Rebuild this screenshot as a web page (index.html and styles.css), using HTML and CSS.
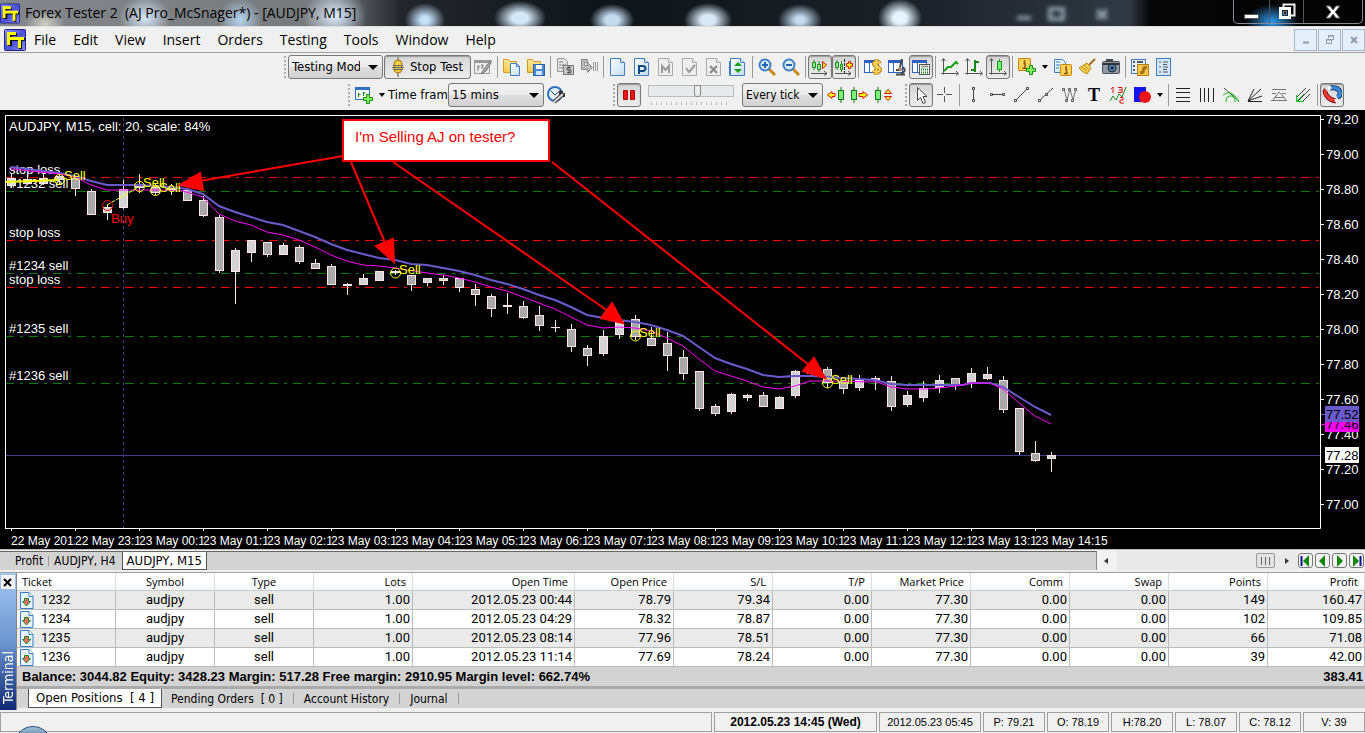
FILE: index.html
```html
<!DOCTYPE html>
<html lang="en">
<head>
<meta charset="utf-8">
<title>Forex Tester 2 (AJ Pro_McSnager*) - [AUDJPY, M15]</title>
<link rel="stylesheet" href="styles.css">
</head>
<body>
<svg class="defs" aria-hidden="true">
  <defs>
    <linearGradient id="ftbg" x1="0" y1="0" x2="1" y2="1"><stop offset="0" stop-color="#8f93f5"/><stop offset=".5" stop-color="#4a4fd8"/><stop offset="1" stop-color="#8a8df0"/></linearGradient>
    <linearGradient id="paper" x1="0" y1="0" x2="1" y2="1"><stop offset="0" stop-color="#fff"/><stop offset="1" stop-color="#c3ddf5"/></linearGradient>
    <linearGradient id="folder" x1="0" y1="0" x2="0" y2="1"><stop offset="0" stop-color="#ffe9a0"/><stop offset="1" stop-color="#f8c548"/></linearGradient>
    <symbol id="logo" viewBox="0 0 22 22"><rect x=".5" y=".5" width="21" height="21" rx="1" fill="url(#ftbg)" stroke="#20208c"/><path d="M4 4h9v3H8v2h4v3H8v5H4z" fill="#111" /><path d="M11 9h10v3h-3v8h-3v-8h-4z" fill="#111"/><path d="M3 3h9v3H6v2h4v3H6v5H3z" fill="#ff0"/><path d="M10 8h10v3h-3v8h-3v-8h-4z" fill="#ff0"/></symbol>
    <symbol id="doc" viewBox="0 0 18 18"><path d="M1.500 .5h10l4 4v13h-14z" fill="url(#paper)" stroke="#3b7fc4"/><path d="M11.500 .5v4h4" fill="#e4f0fb" stroke="#3b7fc4"/></symbol>
    <symbol id="doc-off" viewBox="0 0 18 18"><path d="M1.500 .5h10l4 4v13h-14z" fill="#eee" stroke="#aaa"/><path d="M11.500 .5v4h4" fill="#eee" stroke="#aaa"/></symbol>
    <symbol id="axes" viewBox="0 0 18 18"><path d="M2.500 1v15.500M0 15.500h17M.5 3l2-2.500 2 2.500M15 13l2.500 2.500-2.500 2" fill="none" stroke="#555"/></symbol>
    <symbol id="folder-icon" viewBox="0 0 18 18"><path d="M.5 14.500v-13h5l1 2h7v11z" fill="url(#folder)" stroke="#d69a1c"/></symbol>
    <symbol id="candle" viewBox="0 0 6 16"><path d="M3 0v16" stroke="#157515"/><rect x=".5" y="3.500" width="5" height="9" fill="#7df07d" stroke="#157515"/></symbol>
    <symbol id="info" viewBox="0 0 12 12"><rect x=".5" y=".5" width="11" height="11" rx="1" fill="#fbd35a" stroke="#c8850a"/><path d="M6 2v2M5 5h1.500v4M4 9.500h4" stroke="#8a5a00" stroke-width="1.500" fill="none"/></symbol>
    <symbol id="sell-doc" viewBox="0 0 14 17"><path d="M.5 .5h8.500l4 4v12h-12.500z" fill="#eaf4fd" stroke="#3b7fc4"/><path d="M9 .5v4h4" fill="#fff" stroke="#3b7fc4"/><path d="M4.500 6.500h4v3h2l-4 4.500-4-4.500h2z" fill="#ff6b6b" stroke="#178a17"/></symbol>
    <symbol id="wincells" viewBox="0 0 18 18"><rect x=".5" y="2.500" width="14" height="12" fill="#fff" stroke="#2f62c0"/><path d="M1 4h13" stroke="#2f62c0" stroke-width="2"/><path d="M5.500 5v9" stroke="#2f62c0"/></symbol>
  </defs>
</svg>

<header class="titlebar">
  <svg class="logo-sm"><use href="#logo"/></svg>
  <h1 class="title">Forex Tester 2&nbsp; (AJ Pro_McSnager*) - [AUDJPY, M15]</h1>
  <div class="ghost"><svg width="120" height="22"><path d="M0 16h14M33 7h13v10h-13zM80 8l10 9M90 8l-10 9" fill="none" stroke="#b5cbd8" stroke-width="4"/></svg></div>
  <div class="window-buttons">
    <button class="wb" aria-label="Minimize"><svg width="18" height="18"><rect x="1.500" y="11.500" width="14" height="4" fill="#fff" stroke="#555"/></svg></button>
    <button class="wb wb-mid" aria-label="Restore"><svg width="18" height="18"><path d="M5.500 4.500v-3h11v11h-4" fill="none" stroke="#eee" stroke-width="2"/><rect x="2.500" y="5.500" width="9" height="9" fill="none" stroke="#fff" stroke-width="3"/><rect x="5.500" y="8.500" width="3" height="3" fill="#222" stroke="#777"/></svg></button>
    <button class="wb wb-close" aria-label="Close"><svg width="18" height="18"><path d="M2 3h4l3 4 3-4h4l-5 6 5 6h-4l-3-4-3 4h-4l5-6z" fill="#fff" stroke="#666"/></svg></button>
  </div>
</header>

<nav class="menubar">
  <svg class="logo"><use href="#logo"/></svg>
  <button>File</button><button>Edit</button><button>View</button><button>Insert</button><button>Orders</button><button>Testing</button><button>Tools</button><button>Window</button><button>Help</button>
  <div class="mdi">
    <button aria-label="Minimize chart"><svg width="12" height="12"><path d="M3 8.500h6" stroke="#8b9cb5" stroke-width="2"/></svg></button>
    <button aria-label="Restore chart"><svg width="12" height="12"><path d="M4.500 4v-2.500h5v4h-2M2 5.500h5.500v4h-5v-4" fill="none" stroke="#8b9cb5"/><path d="M4 2h6M2 6h6" stroke="#8b9cb5"/></svg></button>
    <button aria-label="Close chart"><svg width="12" height="12"><path d="M3 3l6 6M9 3l-6 6" stroke="#8b9cb5" stroke-width="2"/></svg></button>
  </div>
</nav>

<section class="toolbars">
  <div class="toolbar toolbar-main">
    <i class="grip"></i>
    <span class="combo combo-mode"><select aria-label="Mode"><option>Testing Mode</option></select></span>
    <button class="tool pressed stop"><svg width="12" height="20"><path d="M6 0v20" stroke="#999" stroke-width="2"/><rect x="2" y="3" width="8" height="13" rx="4" fill="#f4cc42" stroke="#a87a10"/><path d="M1 8.500h10M0 10.500h12M1 12.500h10" stroke="#666"/></svg>Stop Test</button>
    <button class="tool" aria-label="Edit test"><svg width="18" height="18"><rect x=".5" y="2.500" width="15" height="13" fill="#eee" stroke="#999"/><path d="M1 4h14" stroke="#999" stroke-width="2"/><path d="M4 7v6M4 9h2M8 6v5M8 8h2M17 2l-7 9-3 5 5-3 5-8z" fill="#aaa" stroke="#777"/></svg></button>
    <i class="sep"></i>
    <button class="tool" aria-label="Open project"><svg width="18" height="18"><use href="#folder-icon"/><path d="M7.500 5.500h6l3 3v9h-9z" fill="url(#paper)" stroke="#3b7fc4"/><path d="M13.500 5.500v3h3" fill="none" stroke="#3b7fc4"/></svg></button>
    <button class="tool" aria-label="Save project"><svg width="18" height="18"><use href="#folder-icon"/><rect x="6.500" y="6.500" width="11" height="11" fill="#4a88d8" stroke="#2b62ae"/><rect x="9" y="7" width="6" height="4" fill="#fff"/><rect x="9" y="13" width="6" height="4" fill="#d7e6f7"/></svg></button>
    <i class="sep"></i>
    <button class="tool" aria-label="Statement"><svg width="18" height="18"><path d="M1.500 .5h7l3 3v10h-10z" fill="#e4e4e4" stroke="#999"/><path d="M3 4h4M3 7h7M3 10h5" stroke="#888"/><rect x="7.500" y="7.500" width="10" height="9" fill="#ccc" stroke="#777"/><path d="M15 9.500h-4v2.500h4v2.500h-4M13 8v8" fill="none" stroke="#555"/></svg></button>
    <button class="tool" aria-label="Jump to"><svg width="18" height="18"><path d="M1.500 1.500h6v3h-3v3h3v-3l5 5-5 5v-3h-6z" fill="#bbb" stroke="#888"/><path d="M13.500 4v9M15.500 4v9M17.500 4v9" stroke="#999"/></svg></button>
    <i class="sep"></i>
    <button class="tool" aria-label="New"><svg width="18" height="18"><use href="#doc"/></svg></button>
    <button class="tool" aria-label="Pending order"><svg width="18" height="18"><use href="#doc"/><path d="M6 16v-8h4a2 2 0 0 1 0 5H7" fill="none" stroke="#12487c" stroke-width="2"/></svg></button>
    <button class="tool" aria-label="Modify order"><svg width="18" height="18"><use href="#doc-off"/><path d="M5 15V8l3.500 4L12 8v7" fill="none" stroke="#999" stroke-width="2"/></svg></button>
    <button class="tool" aria-label="Confirm"><svg width="18" height="18"><use href="#doc-off"/><path d="M5 10l3 4 6-7" fill="none" stroke="#999" stroke-width="2"/></svg></button>
    <button class="tool" aria-label="Delete order"><svg width="18" height="18"><use href="#doc-off"/><path d="M5 8l7 7M12 8l-7 7" stroke="#888" stroke-width="2"/></svg></button>
    <button class="tool" aria-label="Order list"><svg width="18" height="18"><use href="#doc"/><path d="M.5 3v14.500h13" fill="none" stroke="#3b7fc4"/><path d="M9 4l4 4H5zM9 15l4-4H5z" fill="#14a014"/></svg></button>
    <i class="sep"></i>
    <button class="tool" aria-label="Zoom in"><svg width="18" height="18"><path d="M11 11l6 6" stroke="#c98a1a" stroke-width="3"/><circle cx="7" cy="7" r="5.500" fill="#dcecfb" stroke="#3f7fc8" stroke-width="2"/><path d="M4 7h6M7 4v6" stroke="#1f62b8" stroke-width="2"/></svg></button>
    <button class="tool" aria-label="Zoom out"><svg width="18" height="18"><path d="M11 11l6 6" stroke="#c98a1a" stroke-width="3"/><circle cx="7" cy="7" r="5.500" fill="#dcecfb" stroke="#3f7fc8" stroke-width="2"/><path d="M4 7h6" stroke="#1f62b8" stroke-width="2"/></svg></button>
    <i class="sep"></i>
    <button class="tool pressed" aria-label="Auto scroll"><svg width="18" height="18"><path d="M3 2v10M8 3v11" stroke="#178a17"/><path d="M1.500 4.500h3v5h-3zM6.500 6.500h3v5h-3z" fill="#8ef08e" stroke="#178a17"/><path d="M11.500 3.500v7l4-3.500z" fill="#ff0" stroke="#d81414"/><path d="M0 15.500h16M13 13l3 2.500-3 2" fill="none" stroke="#555"/></svg></button>
    <button class="tool pressed" aria-label="Chart shift"><svg width="18" height="18"><path d="M2 2v10M6.500 3v11" stroke="#178a17"/><path d="M.5 4.500h3v5h-3zM5.500 6.500h2v5h-2z" fill="#8ef08e" stroke="#178a17"/><path d="M9.500 1v14" stroke="#222" stroke-dasharray="3 1"/><path d="M13.500 3.500h2v2h2v3h-2v2h-2v-2h-2v-3h2z" fill="#ff0" stroke="#d81414"/><path d="M0 15.500h16M13 13l3 2.500-3 2" fill="none" stroke="#555"/></svg></button>
    <i class="sep"></i>
    <button class="tool" aria-label="Symbols"><svg width="18" height="18"><use href="#wincells"/><path d="M16 5.500c-1-2-6-2-6 .5s6 2.500 6 5.500-5 3-7 1M12.500 1v16" fill="none" stroke="#b47808" stroke-width="4"/><path d="M16 5.500c-1-2-6-2-6 .5s6 2.500 6 5.500-5 3-7 1M12.500 1v16" fill="none" stroke="#ffd65a" stroke-width="2"/></svg></button>
    <button class="tool" aria-label="Data center"><svg width="18" height="18"><use href="#wincells"/><path d="M14 1l-2 8M15 9q4 5-2 6M8 16.500h9M8 12h5" fill="none" stroke="#444" stroke-width="2"/><circle cx="12" cy="11" r="2" fill="#a86"/></svg></button>
    <button class="tool pressed" aria-label="Terminal window"><svg width="18" height="18"><use href="#wincells"/><rect x="7.500" y="6.500" width="10" height="10" fill="#fff" stroke="#555"/><path d="M9 8.500h7" stroke="#999" stroke-width="2"/><path d="M9 11.500h7M9 14.500h7" stroke="#178a17" stroke-width="2" stroke-dasharray="1 1"/></svg></button>
    <i class="sep"></i>
    <button class="tool" aria-label="Line chart"><svg width="18" height="18"><use href="#axes"/><path d="M3 13l4-4h3l5-5 2 2" fill="none" stroke="#14a014" stroke-width="2"/></svg></button>
    <button class="tool" aria-label="Bar chart"><svg width="18" height="18"><use href="#axes"/><path d="M10 2v12M6 12h4M10 4h4" stroke="#178a17" stroke-width="2"/></svg></button>
    <button class="tool pressed" aria-label="Candle chart"><svg width="18" height="18"><use href="#axes"/><path d="M10.500 1v13" stroke="#14a014"/><rect x="8.500" y="3.500" width="4" height="8" fill="#7df07d" stroke="#14a014"/></svg></button>
    <i class="sep"></i>
    <button class="tool" aria-label="Add indicator"><svg width="18" height="18"><use href="#info" width="13" height="13"/><path d="M11.500 7.500h3v3h3v3h-3v3h-3v-3h-3v-3h3z" fill="#7df05a" stroke="#178a17"/></svg></button>
    <button class="drop" aria-label="Indicator menu"></button>
    <button class="tool" aria-label="Indicator list"><svg width="18" height="18"><path d="M.5 1.500h8l3 3v10h-11z" fill="url(#paper)" stroke="#3b7fc4"/><path d="M2 4h4M2 7h4M2 10h3" stroke="#3b7fc4"/><use href="#info" x="6" y="6" width="12" height="12"/></svg></button>
    <button class="tool" aria-label="Clear"><svg width="18" height="18"><path d="M17 1l-6 6" stroke="#a86a18" stroke-width="2"/><path d="M9 5l4 5-4 6q-5-2-8-6z" fill="#f6cf4c" stroke="#b98a18"/><path d="M4 9l5 4M6 7l5 5" stroke="#c7951e"/></svg></button>
    <button class="tool" aria-label="Screenshot"><svg width="18" height="18"><rect x=".5" y="3.500" width="17" height="12" rx="1" fill="#909aa6" stroke="#4c535c"/><rect x="4" y="1" width="7" height="3" fill="#444"/><path d="M1 6h16" stroke="#333" stroke-width="2"/><circle cx="10" cy="10" r="4" fill="#4b82b8" stroke="#222"/><circle cx="10" cy="10" r="1.500" fill="#111"/></svg></button>
    <i class="sep"></i>
    <button class="tool" aria-label="Strategies"><svg width="18" height="18"><rect x=".5" y="1.500" width="14" height="14" fill="#e3effa" stroke="#3b7fc4"/><path d="M2 4h2M6 4h6M2 8h2M6 8h4M2 12h2" stroke="#555" stroke-width="2"/><rect x="6.500" y="6.500" width="11" height="11" fill="#f6c84c" stroke="#b97f10"/><path d="M9 15l3-1 1-4 3-1" fill="none" stroke="#a87010" stroke-width="3"/></svg></button>
    <button class="tool" aria-label="Strategy list"><svg width="18" height="18"><rect x="1.500" y=".5" width="14" height="17" fill="#d5e8fa" stroke="#3b7fc4"/><path d="M4 4h2M8 4h5M4 9h2M8 9h5M4 14h2M8 14h5M8 6.500h4M8 11.500h4" stroke="#555"/></svg></button>
  </div>

  <div class="toolbar toolbar-second">
    <i class="grip"></i>
    <button class="tool" aria-label="New chart"><svg width="18" height="18"><rect x=".5" y="1.500" width="14" height="12" fill="#fff" stroke="#2f6fc4"/><path d="M0 2.500h15" stroke="#2f6fc4" stroke-width="3"/><path d="M3.500 7v4M3.500 8.500h2M8.500 6v4M8.500 7h2" stroke="#178a17"/><path d="M11.500 8.500h3v3h3v3h-3v3h-3v-3h-3v-3h3z" fill="#7df05a" stroke="#178a17"/></svg></button>
    <button class="drop" aria-label="New chart menu"></button>
    <label class="tf-label" for="tf">Time frame</label>
    <span class="combo combo-tf"><select id="tf"><option>15 mins</option></select></span>
    <button class="tool" aria-label="Time settings"><svg width="18" height="18"><circle cx="8" cy="8" r="7" fill="#e4f1fc" stroke="#2f6fc4" stroke-width="2"/><path d="M4 5l4 4 6-5" fill="none" stroke="#333"/><path d="M7 16l9-8M14 5v4h4" fill="none" stroke="#333" stroke-width="4"/><path d="M7 16l9-8" stroke="#ddd" stroke-width="2"/></svg></button>

    <i class="grip grip-play"></i>
    <button class="tool pressed" aria-label="Pause"><svg width="18" height="18"><path d="M3.500 4.500h4v9h-4zM10.500 4.500h4v9h-4z" fill="#f01414" stroke="#b00808"/></svg></button>
    <span class="slider"><input type="range" aria-label="Speed" min="0" max="100" value="58"></span>
    <span class="combo combo-tick"><select aria-label="Tick mode"><option>Every tick</option></select></span>
    <button class="tool" aria-label="Step back"><svg width="18" height="18"><path d="M5 5.500v2h3v3H5v2L.5 9z" fill="#ff0" stroke="#d81414"/><use href="#candle" x="11" y="1" width="6" height="16"/></svg></button>
    <button class="tool" aria-label="Step forward"><svg width="18" height="18"><use href="#candle" x="0" y="1" width="6" height="16"/><path d="M12 5.500v2H8v3h4v2L16.500 9z" fill="#ff0" stroke="#d81414"/></svg></button>
    <button class="tool" aria-label="Step size"><svg width="18" height="18"><use href="#candle" x="0" y="1" width="6" height="16"/><path d="M13 3.500l3.500 4h-7zM13 14.500l3.500-4h-7z" fill="#ff0" stroke="#d81414"/></svg></button>

    <i class="grip grip-draw"></i>
    <button class="tool pressed" aria-label="Pointer"><svg width="18" height="18"><path d="M5.500 1.500v13l3-3 2.500 6 2.500-1-2.500-6h4z" fill="#fff" stroke="#444"/></svg></button>
    <button class="tool" aria-label="Crosshair"><svg width="18" height="18"><path d="M8.500 1v6M8.500 10v6M1 8.500h6M10 8.500h6" stroke="#555"/></svg></button>
    <i class="sep"></i>
    <button class="tool" aria-label="Vertical line"><svg width="18" height="18"><path d="M8.500 3v11" stroke="#444"/><path d="M7.500 1.500h2v2h-2zM7.500 13.500h2v2h-2z" fill="#fff" stroke="#444"/></svg></button>
    <button class="tool" aria-label="Horizontal line"><svg width="18" height="18"><path d="M3 8.500h11" stroke="#444"/><path d="M1.500 7.500h2v2h-2zM13.500 7.500h2v2h-2z" fill="#fff" stroke="#444"/></svg></button>
    <button class="tool" aria-label="Trend line"><svg width="18" height="18"><path d="M3 14L14 3" stroke="#444"/><path d="M1.500 13.500h2v2h-2zM13.500 1.500h2v2h-2z" fill="#fff" stroke="#444"/></svg></button>
    <button class="tool" aria-label="Ray"><svg width="18" height="18"><path d="M3 14L16 2" stroke="#444"/><path d="M1.500 13.500h2v2h-2zM8.500 7.500h2v2h-2z" fill="#fff" stroke="#444"/></svg></button>
    <button class="tool" aria-label="Polyline"><svg width="18" height="18"><path d="M3 3l3 11 3-11 3 11 3-11" fill="none" stroke="#777"/><path d="M1.500 2.500h2v2h-2zM7.500 2.500h2v2h-2zM13.500 2.500h2v2h-2zM4.500 13.500h2v2h-2zM10.500 13.500h2v2h-2z" fill="#fff" stroke="#555"/></svg></button>
    <button class="tool letter" aria-label="Text">T</button>
    <button class="tool" aria-label="Wave count"><svg width="18" height="18"><path d="M1 15l3-5 3 4 3-6 3 3 4-10" fill="none" stroke="#178a17"/><path d="M2 3l2-2v6M9 1.500h4v2.500h-3M13 4v2.500h-4M11 11.500h3v2.500h-3v3h4" fill="none" stroke="#e01414"/></svg></button>
    <button class="tool" aria-label="Shapes"><svg width="18" height="18"><rect x="1" y="1" width="12" height="15" fill="#1414f0"/><circle cx="12" cy="11" r="6" fill="#f01414"/></svg></button>
    <button class="drop" aria-label="Shape menu"></button>
    <i class="sep"></i>
    <button class="tool" aria-label="Fibonacci levels"><svg width="18" height="18"><path d="M2 2.500h14M2 6.500h14M2 11.500h14M2 15.500h14" stroke="#222"/></svg></button>
    <button class="tool" aria-label="Fibonacci time"><svg width="18" height="18"><path d="M2.500 2v14M6.500 2v14M10.500 2v14M15.500 2v14" stroke="#222"/></svg></button>
    <button class="tool" aria-label="Fibonacci arcs"><svg width="18" height="18"><path d="M2 2l15 13" stroke="#444"/><path d="M1 9q9-7 16 7M4 16q0-7 6-6 4 2 3 6" fill="none" stroke="#14c014" stroke-width="1"/></svg></button>
    <button class="tool" aria-label="Gann fan"><svg width="18" height="18"><path d="M2 15.500h14M2 15l14-5M2 15L15 3M2 15L8 3" stroke="#222"/></svg></button>
    <button class="tool" aria-label="Retracement"><svg width="18" height="18"><path d="M2 3.500h14M2 7.500h4M12 7.500h4M1 14.500h16M3 14l6-8 3 3 4 5M4 11.500h10" fill="none" stroke="#777"/></svg></button>
    <button class="tool" aria-label="Pitchfork"><svg width="18" height="18"><path d="M3 11L12 2M4 15L16 3M9 15l7-7" stroke="#444"/><path d="M2.500 9v6.500h7M3 15l7-7" fill="none" stroke="#14c014"/></svg></button>
    <i class="sep"></i>
    <button class="tool pressed" aria-label="Magnet"><svg width="20" height="20"><path d="M8 3q8-1 10 4 1 4-3 5" fill="none" stroke="#173f78" stroke-width="5"/><path d="M8 3q8-1 10 4 1 4-3 5" fill="none" stroke="#3d8ae0" stroke-width="3"/><path d="M4 5q-2 2 1 6t9 5" fill="none" stroke="#7c1010" stroke-width="5"/><path d="M4 5q-2 2 1 6t9 5" fill="none" stroke="#ee3a32" stroke-width="3"/><path d="M6 4l3-2M13 16l3-2" stroke="#fff" stroke-width="3"/></svg></button>
  </div>
</section>

<main>
  <svg class="chart" viewBox="0 110 1365 439" role="img" aria-label="AUDJPY M15 chart">
    <rect y="110" width="1365" height="439" fill="#000"/>
    <g class="levels">
      <path class="loss" d="M5 177.500H1320M5 240.500H1320M5 287.500H1320"/>
      <path class="entry" d="M5 191.500H1320M5 273.500H1320M5 336.500H1320M5 383.500H1320"/>
    </g>
    <path d="M123.500 118V528" stroke="#483d8b" stroke-dasharray="3 3"/>
    <path d="M6 455.500H1320" stroke="#483d8b"/>
    <g id="candles"></g>
    <g class="label">
      <text x="9" y="131">AUDJPY, M15, cell: 20, scale: 84%</text>
      <text x="9" y="174">stop loss</text><text x="9" y="188">#1232 sell</text>
      <text x="9" y="237">stop loss</text><text x="9" y="270">#1234 sell</text>
      <text x="9" y="284">stop loss</text><text x="9" y="333">#1235 sell</text>
      <text x="9" y="380">#1236 sell</text>
    </g>
    <polyline class="ma-slow" points="11,167 43,171 59,173 75,176 91,181 107,185 139,185 171,187 187,189 203,194 219,206 235,212 251,217 267,222 283,225 299,231 315,237 331,244 347,250 363,254 379,258 395,260 411,264 427,265 443,268 459,271 475,275 491,280 507,284 523,289 539,295 555,300 571,307 587,315 603,318 619,320 635,322 651,325 667,330 683,336 699,347 715,358 731,364 747,369 763,375 779,377 795,376 811,376 827,377 843,378 859,379 875,380 891,384 907,385 939,385 963,385 971,383 990,383 1003,387 1019,397 1035,407 1051,415"/>
    <polyline class="ma-fast" points="11,169 40,172 60,174 75,177 91,185 107,190 160,190 183,191 203,197 219,214 235,221 251,225 267,232 283,235 299,240 315,247 331,255 347,261 363,265 379,266 395,268 407,270 427,273 443,275 459,278 475,282 491,287 507,291 523,297 539,303 555,309 571,317 587,325 603,328 619,327 635,328 651,331 667,338 683,346 699,359 715,371 731,376 747,381 763,387 779,389 795,386 810,381 827,381 877,382 891,387 907,389 927,389 939,388 957,386 971,383 990,383 1003,389 1019,403 1035,416 1051,424"/>
    <path d="M6 182L59 180" stroke="#ff0" stroke-width="2"/>
    <path d="M107 205L139 187" stroke="#ff0" stroke-dasharray="4 1"/>
    <g class="fills">
      <circle cx="59.500" cy="179.500" r="5"/><circle cx="107.500" cy="205.500" r="5" stroke="#f00"/><circle cx="139.500" cy="186.500" r="5"/><circle cx="155.500" cy="190.500" r="5"/><circle cx="395.500" cy="273" r="5"/><circle cx="635.500" cy="336" r="5"/><circle cx="827.500" cy="383" r="5"/>
    </g>
    <g class="sells">
      <text x="64" y="180">Sell</text><text x="143" y="187">Sell</text><text x="159" y="192">Sell</text><text x="399" y="274">Sell</text><text x="639" y="337">Sell</text><text x="831" y="384">Sell</text>
      <text class="buy" x="111" y="223">Buy</text>
    </g>
    <path d="M5.500 529V115.500H1320.500V528.500H5" fill="none" stroke="#fff"/>
    <g class="arrows">
      <path d="M343 156L200 181M351 162L386 245M393 162L608 311M552 162L809 365"/>
      <path class="heads" d="M180 185L200 173L203 190zM394 262L376 246L393 239zM623 323L612 303L601 318zM825 378L814 358L803 371z"/>
    </g>
    <rect x="343" y="120" width="206" height="41" fill="#fff" stroke="#f00" stroke-width="2"/>
    <text class="note" x="355" y="142">I'm Selling AJ on tester?</text>
    <g id="price-axis" class="label"></g>
    <g id="time-axis" class="label"></g>
    <path d="M1321 424.500h4" stroke="#f0f"/><rect x="1325" y="418" width="34" height="14" fill="#f0f"/><text class="tag" x="1326" y="429">77.46</text>
    <path d="M1321 414.500h4" stroke="#6a5acd"/><rect x="1325" y="406" width="34" height="16" fill="#6a5acd"/><text class="tag" x="1326" y="419">77.52</text>
    <rect x="1325" y="447" width="34" height="16" fill="#fff"/><text class="tag" x="1326" y="460">77.28</text>
  </svg>
</main>

<div class="chart-tabs">
  <div class="tabs">
    <button>Profit</button><i class="tab-sep"></i><button>AUDJPY, H4</button><button class="active">AUDJPY, M15</button>
  </div>
  <div class="hscroll"><i class="arrow-left"></i><i class="thumb"></i><i class="arrow-right"></i></div>
  <div class="nav">
    <button aria-label="First"><svg width="11" height="12"><path d="M1.500 1v10" stroke="#10108c" stroke-width="2"/><path d="M9 0v12L3 6z" fill="#14870a"/></svg></button>
    <button aria-label="Previous"><svg width="11" height="12"><path d="M8 0v12L2 6z" fill="#14870a"/></svg></button>
    <button aria-label="Next"><svg width="11" height="12"><path d="M3 0v12l6-6z" fill="#14870a"/></svg></button>
    <button aria-label="Last"><svg width="11" height="12"><path d="M9.500 1v10" stroke="#10108c" stroke-width="2"/><path d="M2 0v12l6-6z" fill="#14870a"/></svg></button>
  </div>
</div>

<section class="terminal">
  <aside class="side">
    <button aria-label="Close terminal"><svg width="13" height="13"><path d="M3 3l7 7M10 3l-7 7" stroke="#000" stroke-width="2"/></svg></button>
    <span>Terminal</span>
  </aside>
  <div class="panel">
    <table class="positions">
      <colgroup><col class="c"><col class="c"><col class="c"><col class="c"><col><col class="c"><col class="c"><col class="c"><col class="c"><col class="c"><col class="c"><col class="c"><col class="c-last"></colgroup>
      <thead><tr><th>Ticket</th><th>Symbol</th><th>Type</th><th>Lots</th><th>Open Time</th><th>Open Price</th><th>S/L</th><th>T/P</th><th>Market Price</th><th>Comm</th><th>Swap</th><th>Points</th><th>Profit</th></tr></thead>
      <tbody>
        <tr><td><svg width="14" height="17"><use href="#sell-doc"/></svg>1232</td><td>audjpy</td><td>sell</td><td>1.00</td><td>2012.05.23 00:44</td><td>78.79</td><td>79.34</td><td>0.00</td><td>77.30</td><td>0.00</td><td>0.00</td><td>149</td><td>160.47</td></tr>
        <tr><td><svg width="14" height="17"><use href="#sell-doc"/></svg>1234</td><td>audjpy</td><td>sell</td><td>1.00</td><td>2012.05.23 04:29</td><td>78.32</td><td>78.87</td><td>0.00</td><td>77.30</td><td>0.00</td><td>0.00</td><td>102</td><td>109.85</td></tr>
        <tr><td><svg width="14" height="17"><use href="#sell-doc"/></svg>1235</td><td>audjpy</td><td>sell</td><td>1.00</td><td>2012.05.23 08:14</td><td>77.96</td><td>78.51</td><td>0.00</td><td>77.30</td><td>0.00</td><td>0.00</td><td>66</td><td>71.08</td></tr>
        <tr><td><svg width="14" height="17"><use href="#sell-doc"/></svg>1236</td><td>audjpy</td><td>sell</td><td>1.00</td><td>2012.05.23 11:14</td><td>77.69</td><td>78.24</td><td>0.00</td><td>77.30</td><td>0.00</td><td>0.00</td><td>39</td><td>42.00</td></tr>
      </tbody>
    </table>
    <div class="balance"><span>Balance: 3044.82 Equity: 3428.23 Margin: 517.28 Free margin: 2910.95 Margin level: 662.74%</span><span>383.41</span></div>
    <div class="term-tabs"><button class="active">Open Positions&nbsp; [ 4 ]</button><button>Pending Orders&nbsp; [ 0 ]</button><i class="tab-sep"></i><button>Account History</button><i class="tab-sep"></i><button>Journal</button><i class="tab-sep"></i></div>
  </div>
</section>

<footer class="status">
  <span class="cell fill"></span><span class="cell now">2012.05.23 14:45 (Wed)</span><span class="cell date">2012.05.23 05:45</span><span class="cell">P: 79.21</span><span class="cell">O: 78.19</span><span class="cell">H:78.20</span><span class="cell">L: 78.07</span><span class="cell">C: 78.12</span><span class="cell">V: 39</span>
  <i class="orb"></i>
</footer>
<script src="chart.js"></script>
</body>
</html>
```

FILE: styles.css
```css
* { box-sizing: border-box; }
body { margin: 0; background: #f0f0f0; color: #000; font: 13px/16px "DejaVu Sans Condensed", "Noto Sans", sans-serif; }
button { border: 0; padding: 0; margin: 0; background: none; font: inherit; color: inherit; }
svg { display: block; }
.defs { position: absolute; width: 0; height: 0; }

.titlebar {
  display: flex; align-items: center; height: 27px; padding-left: 0; overflow: hidden;
  border-bottom: 1px solid #ddd;
  background:
    radial-gradient(ellipse 20px 14px at 45px 24px, #cfd0c4, transparent),
    radial-gradient(ellipse 26px 22px at 145px 18px, #d5e6fa, transparent),
    radial-gradient(ellipse 22px 22px at 240px 20px, #b5d3ef, transparent),
    radial-gradient(ellipse 32px 26px at 335px 16px, #dcecff, transparent),
    radial-gradient(ellipse 20px 17px at 425px 20px, #c5e2fa 20%, transparent),
    radial-gradient(ellipse 26px 17px at 520px 18px, #d5e8f8 30%, transparent),
    radial-gradient(ellipse 22px 16px at 612px 20px, #c5dcf0 30%, transparent),
    radial-gradient(ellipse 24px 17px at 708px 20px, #d8e8f6 30%, transparent),
    radial-gradient(ellipse 22px 16px at 800px 20px, #c5dcf0 20%, transparent),
    radial-gradient(ellipse 22px 19px at 900px 18px, #e5f4ff 30%, transparent),
    radial-gradient(ellipse 26px 18px at 1272px 22px, #2f9df0, transparent),
    linear-gradient(90deg, #83878b 0, #777a7d 330px, #23272c 400px, #10151a 600px, #1a2026 900px, #303843 1130px, #060606 1150px, #030303 100%);
}
.logo-sm { width: 20px; height: 21px; }
.title { flex: 1; margin: 0 0 0 5px; font: 14px/20px "Open Sans", sans-serif; color: #000; white-space: nowrap; }
.ghost { margin-right: 96px; filter: blur(2px); opacity: .7; }
.window-buttons { display: flex; align-self: flex-start; margin-right: 2px; height: 24px; border: 1px solid #889; border-top: 0; border-radius: 0 0 5px 5px; }
.wb { width: 36px; display: flex; justify-content: center; align-items: center; border-right: 1px solid #556; }
.wb-mid { width: 34px; }
.wb-close { width: 58px; border-right: 0; }

.menubar { display: flex; align-items: center; height: 26px; gap: 17px; padding-left: 4px; border-bottom: 1px solid #a0a0a0; font: 14px/20px "Open Sans", sans-serif; }
.logo { width: 22px; height: 22px; margin-right: -9px; }
.mdi { display: flex; margin-left: auto; gap: 1px; }
.mdi button { width: 23px; height: 22px; display: grid; place-items: center; background: #e4effb; border: 1px solid #a8b8cc; }

.toolbars { padding-bottom: 1px; }
.toolbar { display: flex; align-items: center; height: 28px; }
.toolbar-main { padding-left: 284px; }
.toolbar-second { padding-left: 348px; }
.toolbar > * { flex: none; }
.grip { width: 4px; height: 22px; background: radial-gradient(circle at 1px 1px, #aaa 1px, transparent 1px) 0 0 / 4px 4px; }
.grip-play { margin-left: 45px; }
.grip-draw { margin-left: 9px; }
.tool { width: 24px; height: 24px; display: flex; align-items: center; justify-content: center; }
.pressed { border: 1px solid #777; border-radius: 3px; background: linear-gradient(#d6d6d6, #ececec); box-shadow: inset 0 1px 1px #999; }
.stop { width: 87px; gap: 6px; margin-left: 1px; white-space: nowrap; }
.letter { font: bold 18px/20px "Liberation Serif", serif; }
.sep { width: 5px; height: 22px; background: linear-gradient(90deg, transparent 2px, #9a9a9a 2px, #9a9a9a 3px, transparent 3px); }
.drop { width: 12px; height: 20px; display: grid; place-items: center; }
.drop::after { content: ""; border: 3px solid transparent; border-top: 4px solid #000; border-bottom: 0; }
.combo { position: relative; display: block; }
.combo select { appearance: none; width: 100%; height: 24px; padding: 0 22px 0 3px; border: 1px solid #7a7a7a; border-radius: 3px; background: linear-gradient(#f3f3f3, #ebebeb 50%, #dedede 51%, #d2d2d2); color: #000; font: inherit; overflow: hidden; }
.combo::after { content: ""; position: absolute; right: 5px; top: 10px; border: 5px solid transparent; border-top: 5px solid #000; border-bottom: 0; pointer-events: none; }
.combo-mode { width: 95px; }
.combo-tf { width: 96px; }
.combo-tick { width: 81px; margin-right: 1px; }
.combo-tick select { padding-right: 16px; font-size: 12px; }
.tf-label { width: 60px; overflow: hidden; white-space: nowrap; }
.slider { width: 86px; height: 20px; margin: 0 8px 0 7px; background: repeating-linear-gradient(90deg, #bbb 0 1px, transparent 1px 5px) 3px 17px / 80px 3px no-repeat; }
.slider input { appearance: none; display: block; width: 100%; height: 12px; margin: 0; background: #e7eaea; border: 1px solid #bbb; }
.slider input::-webkit-slider-thumb { appearance: none; width: 7px; height: 12px; border: 1px solid #888; border-radius: 0 0 3px 3px; background: #eee; }

.chart { width: 100%; height: auto; }
.chart text { font: 13px "Liberation Sans", sans-serif; }
.label { fill: #fff; }
.levels path { stroke-dasharray: 9 6 3 6; }
.loss { stroke: #f00; }
.entry { stroke: #008000; }
.ma-slow { fill: none; stroke: #6a5acd; stroke-width: 2; }
.ma-fast { fill: none; stroke: #f0f; }
.fills circle { fill: none; stroke: #ff0; }
.fills circle[stroke] { stroke: #f00; }
.sells { fill: #ff0; }
.buy { fill: #f00; }
.arrows { fill: none; stroke: #f00; stroke-width: 2; }
.heads { fill: #f00; }
.chart .note { font-size: 15px; fill: #f00; }
.chart .tag { fill: #000; }
.chart #time-axis text { font-size: 12px; }

.chart-tabs { display: flex; height: 24px; padding-top: 1px; border-bottom: 1px solid #a0a0a0; border-top: 1px solid #bbb; }
.tabs { flex: 1; display: flex; align-items: stretch; height: 19px; padding-left: 12px; background: #d3d3d3; border-top: 1px solid #666; border-right: 1px solid #888; font-size: 12px; }
.tabs button { padding: 0 3px; white-space: nowrap; }
.tab-sep { width: 1px; margin: 4px 2px; background: #999; }
.tabs .active { margin-left: 3px; padding: 0 4px; background: #fff; border: 1px solid #555; border-top: 0; font-size: 13px; }
.hscroll { display: flex; align-items: center; width: 201px; height: 19px; padding: 0 9px 0 7px; background: linear-gradient(90deg, #f2f2f2 20px, #e9e9e9 20px); }
.arrow-left, .arrow-right { border: 3px solid transparent; }
.arrow-left { border-right: 4px solid #333; border-left: 0; }
.arrow-right { border-left: 4px solid #333; border-right: 0; }
.thumb { width: 19px; height: 15px; margin: 0 10px 0 auto; border: 1px solid #999; border-radius: 2px; background: repeating-linear-gradient(90deg, #666 0 1px, transparent 1px 4px) 4px 3px / 9px 8px no-repeat, #e2e2e2; }
.nav { display: flex; gap: 2px; align-items: center; height: 19px; padding-right: 1px; }
.nav button { width: 15px; height: 15px; display: grid; place-items: center; border: 1px solid #777; border-radius: 3px; background: #f2f2f2; }

.terminal { display: flex; }
.side { width: 16px; display: flex; flex-direction: column; justify-content: space-between; align-items: center; padding: 2px 1px 6px 1px; background: linear-gradient(#a3c6f2, #6d95cf 50%, #0e2a74); color: #fff; }
.side button { width: 14px; height: 14px; background: #f4f4f4; }
.side span { writing-mode: vertical-rl; transform: rotate(180deg); font-size: 14px; line-height: 15px; }
.panel { flex: 1; min-width: 0; border-left: 1px solid #888; background: #fff; }
.positions { width: 100%; table-layout: fixed; border-collapse: separate; border-spacing: 0; }
.c { width: 99px; }
.c-last { width: 97px; }
th { height: 18px; padding: 0 6px; font: 11px/17px "Open Sans", sans-serif; text-align: right; border-right: 1px solid #ddd; border-bottom: 1px solid #ccc; background: linear-gradient(#fff 50%, #f3f5f7); white-space: nowrap; }
td { height: 19px; padding: 0 2px; font: 13px/18px Roboto, sans-serif; text-align: right; border-right: 1px solid #bbb; border-bottom: 1px solid #bbb; white-space: nowrap; }
tr:nth-child(odd) td { background: #eaeaea; }
tr > :first-child { text-align: left; }
th:first-child { padding-left: 5px; }
td:first-child { padding-left: 3px; }
td svg { display: inline-block; vertical-align: middle; margin-right: 7px; }
tr > :nth-child(2), tr > :nth-child(3) { text-align: center; }
.balance { display: flex; justify-content: space-between; height: 19px; padding: 0 2px 0 5px; background: #d3d3d3; font: bold 13px/19px "Liberation Sans", sans-serif; }
.term-tabs { display: flex; height: 24px; padding-left: 11px; border-top: 3px solid #aaa; border-bottom: 2px solid #f0f0f0; background: #d3d3d3; font-size: 12px; }
.term-tabs button { padding: 0 9px; white-space: nowrap; }
.term-tabs .tab-sep { margin: 4px 1px; }
.term-tabs .active { background: #fff; border: 1px solid #555; border-top: 0; padding: 0 7px; font-size: 13px; }

.status { position: relative; display: flex; gap: 2px; height: 23px; padding: 2px 0 1px; overflow: hidden; font: 11px/18px "Liberation Sans", sans-serif; }
.cell { width: 62px; border: 1px solid #a0a0a0; text-align: center; white-space: nowrap; }
.fill { flex: 1; }
.now { width: 163px; font-weight: bold; font-size: 12px; }
.date { width: 102px; }
.orb { position: absolute; left: 14px; top: 16px; width: 38px; height: 38px; border: 1px solid #234f78; border-radius: 50%; background: linear-gradient(#a6bfd4, #5b89b0 10px); }
```

FILE: chart.js
```js
// Each bar: high, body top, body bottom, low, rising (1) or falling (0)
const bars = [
  [174,178,186,188,1],[174,179,184,184,1],[174,178,184,185,1],[171,176,180,184,1],[176,178,189,196,0],
  [189,191,215,215,0],[205,207,213,220,1],[180,189,208,209,1],[174,184,188,193,1],[184,187,193,195,0],
  [184,187,190,195,1],[188,190,201,201,0],[196,200,216,217,0],[215,217,271,273,0],[248,250,272,304,1],
  [240,240,253,262,1],[242,242,255,257,0],[243,245,255,255,1],[245,247,262,264,0],[259,263,269,269,0],
  [264,266,285,285,0],[283,284,286,295,1],[274,278,285,285,1],[271,271,281,281,1],[270,271,273,275,1],
  [275,275,285,291,0],[278,278,283,286,1],[275,278,281,285,1],[278,278,288,292,0],[284,289,295,306,0],
  [294,296,309,317,0],[293,305,307,314,1],[301,306,318,319,0],[306,315,326,331,0],[320,327,328,332,1],
  [324,329,347,352,0],[345,348,356,366,0],[330,336,354,356,1],[317,320,335,339,1],[315,319,337,340,0],
  [327,338,346,346,0],[332,343,356,371,0],[350,357,374,380,0],[371,371,409,411,0],[404,406,414,416,0],
  [393,394,412,414,1],[394,395,398,401,1],[392,395,407,407,0],[396,397,409,409,1],[370,371,396,398,1],
  [371,372,374,375,1],[367,369,383,388,0],[381,381,389,394,0],[375,380,388,391,1],[376,378,380,390,1],
  [376,381,407,411,0],[391,395,405,407,1],[381,388,398,402,1],[375,380,388,393,1],[378,378,386,390,0],
  [368,373,384,388,1],[367,374,379,380,1],[376,380,410,413,0],[408,408,452,455,0],[441,453,461,462,0],
  [452,455,459,472,1]
];
const NS = "http://www.w3.org/2000/svg";
function add(parent, name, attrs, text) {
  const el = document.createElementNS(NS, name);
  for (const k in attrs) el.setAttribute(k, attrs[k]);
  if (text) el.textContent = text;
  parent.appendChild(el);
}
const candles = document.getElementById("candles");
bars.forEach(([high, top, bottom, low, up], i) => {
  const x = 11 + 16 * i;
  add(candles, "path", { d: `M${x + 0.5} ${high}V${low}`, stroke: "#ffe4e1" });
  add(candles, "rect", { x: x - 3.5, y: top + 0.5, width: 8, height: Math.max(bottom - top - 1, 0.1), fill: up ? "#d3d3d3" : "#a9a9a9", stroke: "#ffe4e1" });
});

const priceAxis = document.getElementById("price-axis");
for (let k = 0; k < 12; k++) {
  const y = 119 + 35 * k;
  add(priceAxis, "path", { d: `M1321 ${y + 0.5}h3`, stroke: "#fff" });
  add(priceAxis, "text", { x: 1326, y: y + 5 }, (79.2 - 0.2 * k).toFixed(2));
}

// Each time label covers the tail of the one before it
const timeAxis = document.getElementById("time-axis");
for (let k = 0; k < 17; k++) {
  const x = 11 + 64 * k;
  const hour = String(k - 2).padStart(2, "0");
  const text = k === 0 ? "22 May 2012" : k === 1 ? "22 May 23:15" : `23 May ${hour}:15`;
  add(timeAxis, "path", { d: `M${x + 0.5} 529v2`, stroke: "#fff" });
  add(timeAxis, "rect", { x, y: 533, width: 76, height: 15, fill: "#000" });
  add(timeAxis, "text", { x, y: 545 }, text);
}
```
